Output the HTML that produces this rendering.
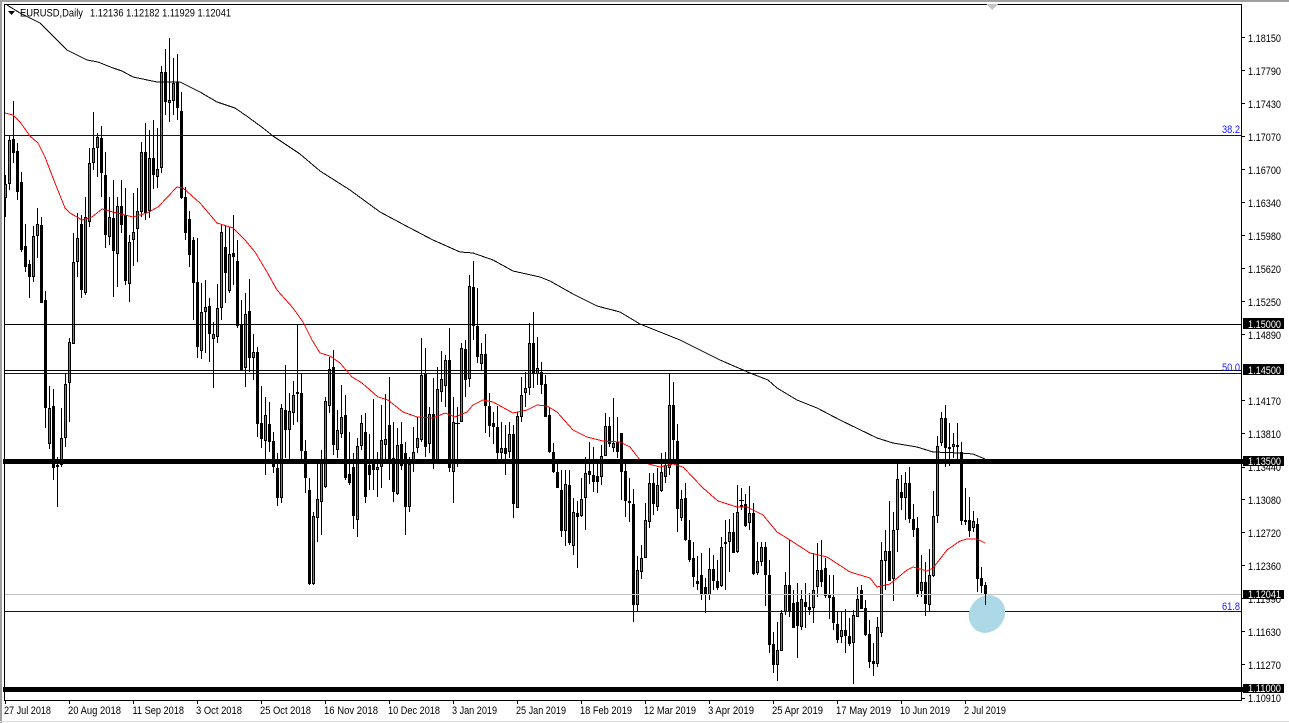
<!DOCTYPE html>
<html lang="en"><head><meta charset="utf-8"><title>EURUSD,Daily</title>
<style>
html,body{margin:0;padding:0;background:#fff;width:1289px;height:723px;overflow:hidden}
svg{display:block}
text{font-family:"Liberation Sans",Arial,sans-serif;font-size:11px;fill:#000}
.w text{fill:#fff}
.b text{fill:#1a1aff}
</style></head><body>
<svg width="1289" height="723" viewBox="0 0 1289 723" xmlns="http://www.w3.org/2000/svg">
<rect width="1289" height="723" fill="#fff"/>
<g shape-rendering="crispEdges">
<rect x="0" y="0" width="1289" height="2" fill="#a0a0a0"/>
<rect x="0" y="0" width="2" height="723" fill="#a0a0a0"/>
<rect x="0" y="721" width="1289" height="1" fill="#dcdcdc"/>
<path d="M4.5 4.5H1241.5V700.5H4.5Z" fill="none" stroke="#000"/>
<polygon points="986,4 998,4 992,10" fill="#c4c4c4"/>
<path fill="none" stroke="#000" d="M5.5 175V217M9.5 135V190M13.5 101V163M17.5 143V200M21.5 172V252M25.5 224V272M29.5 260V298M33.5 226V282M37.5 208V258M41.5 217V303M45.5 291V428M49.5 386V449M53.5 389V480M57.5 457V507M61.5 408V467M65.5 373V447M69.5 338V422M73.5 233V344M77.5 213V277M81.5 215V298M85.5 197V295M89.5 148V227M93.5 112V170M97.5 133V177M101.5 126V197M105.5 152V248M109.5 197V245M113.5 180V297M117.5 197V287M121.5 180V233M125.5 188V285M129.5 235V302M133.5 193V266M137.5 188V262M141.5 142V217M145.5 123V220M149.5 130V218M153.5 120V189M157.5 128V188M161.5 66V173M165.5 49V115M169.5 38V122M173.5 58V115M177.5 54V120M181.5 92V199M185.5 187V240M189.5 211V267M193.5 237V320M197.5 238V358M201.5 283V359M205.5 280V353M209.5 298V362M213.5 322V388M217.5 284V343M221.5 225V320M225.5 225V303M229.5 227V293M233.5 215V285M237.5 240V328M241.5 300V371M245.5 293V387M249.5 279V372M253.5 334V380M257.5 347V437M261.5 386V448M265.5 397V475M269.5 402V452M273.5 432V473M277.5 453V506M281.5 404V503M285.5 365V458M289.5 393V460M293.5 381V425M297.5 324V422M301.5 373V460M305.5 440V493M309.5 478V585M313.5 512V585M317.5 463V542M321.5 450V535M325.5 397V488M329.5 357V413M333.5 350V455M337.5 410V458M341.5 385V438M345.5 395V480M349.5 432V485M353.5 453V529M357.5 438V537M361.5 415V450M365.5 413V503M369.5 434V490M373.5 399V490M377.5 452V497M381.5 405V488M385.5 394V460M389.5 377V480M393.5 422V502M397.5 428V495M401.5 422V470M405.5 442V535M409.5 457V512M413.5 427V472M417.5 417V453M421.5 338V442M425.5 348V457M429.5 407V453M433.5 378V469M437.5 367V460M441.5 351V402M445.5 355V407M449.5 328V472M453.5 397V503M457.5 407V467M461.5 343V422M465.5 340V397M469.5 275V387M473.5 261V340M477.5 288V363M481.5 343V371M485.5 334V433M489.5 393V437M493.5 412V444M497.5 406V460M501.5 422V460M505.5 425V475M509.5 422V458M513.5 425V518M517.5 412V508M521.5 377V422M525.5 372V407M529.5 323V395M533.5 312V388M537.5 337V385M541.5 362V394M545.5 375V417M549.5 407V453M553.5 443V473M557.5 463V488M561.5 470V537M565.5 470V546M569.5 470V545M573.5 498V555M577.5 501V568M581.5 478V517M585.5 457V530M589.5 442V484M593.5 447V492M597.5 460V493M601.5 445V485M605.5 413V456M609.5 417V447M613.5 398V452M617.5 417V458M621.5 433V500M625.5 460V517M629.5 478V522M633.5 489V622M637.5 556V612M641.5 545V579M645.5 503V558M649.5 473V528M653.5 473V515M657.5 468V511M661.5 453V492M665.5 452V483M669.5 373V475M673.5 382V460M677.5 424V532M681.5 490V521M685.5 483V541M689.5 520V562M693.5 542V587M697.5 556V590M701.5 553V600M705.5 578V613M709.5 548V600M713.5 555V590M717.5 560V590M721.5 537V587M725.5 520V590M729.5 519V572M733.5 513V553M737.5 485V553M741.5 488V510M745.5 494V527M749.5 486V530M753.5 503V575M757.5 542V575M761.5 542V566M765.5 542V606M769.5 560V653M773.5 632V673M777.5 622V681M781.5 610V651M785.5 572V615M789.5 540V617M793.5 590V628M797.5 583V658M801.5 590V630M805.5 583V628M809.5 593V615M813.5 553V623M817.5 543V597M821.5 540V587M825.5 558V598M829.5 575V619M833.5 575V630M837.5 612V643M841.5 612V643M845.5 609V653M849.5 618V646M853.5 610V684M857.5 587V617M861.5 585V609M865.5 600V636M869.5 620V668M873.5 643V676M877.5 617V667M881.5 542V637M885.5 530V590M889.5 501V581M893.5 512V601M897.5 464V552M901.5 475V510M905.5 472V520M909.5 467V523M913.5 504V537M917.5 517V597M921.5 555V597M925.5 562V616M929.5 549V612M933.5 491V577M937.5 436V523M941.5 412V446M945.5 405V467M949.5 423V466M953.5 433V458M957.5 423V460M961.5 442V525M965.5 488V525M969.5 497V537M973.5 511V532M977.5 518V592M981.5 567V593"/>
<path fill="none" stroke="#000" stroke-width="3" d="M5.5 184V198M9.5 140V184M13.5 139V153M17.5 151V192M21.5 182V250M25.5 246V267M29.5 264V277M33.5 236V277M37.5 224V236M41.5 225V303M45.5 300V408M49.5 408V444M53.5 406V468M57.5 465V467M61.5 438V465M65.5 384V438M69.5 342V383M73.5 262V344M77.5 238V262M81.5 224V290M85.5 217V293M89.5 163V222M93.5 148V163M97.5 137V148M101.5 138V173M105.5 175V235M109.5 217V237M113.5 218V251M117.5 206V254M121.5 206V225M125.5 215V281M129.5 242V284M133.5 232V240M137.5 211V229M141.5 152V212M145.5 152V213M149.5 158V211M153.5 158V175M157.5 169V177M161.5 72V168M165.5 72V102M169.5 100V103M173.5 83V101M177.5 82V108M181.5 111V198M185.5 197V233M189.5 219V255M193.5 240V283M197.5 282V347M201.5 312V351M205.5 307V312M209.5 306V334M213.5 334V339M217.5 308V337M221.5 232V308M225.5 247V273M229.5 254V291M233.5 253V257M237.5 261V326M241.5 325V371M245.5 314V368M249.5 311V358M253.5 352V358M257.5 352V424M261.5 423V439M265.5 415V441M269.5 424V442M273.5 441V467M277.5 468V498M281.5 408V498M285.5 410V430M289.5 411V430M293.5 395V413M297.5 392V394M301.5 393V451M305.5 451V478M309.5 490V584M313.5 516V584M317.5 499V518M321.5 463V502M325.5 401V487M329.5 369V406M333.5 367V445M337.5 430V450M341.5 417V434M345.5 415V478M349.5 474V483M353.5 467V516M357.5 446V520M361.5 423V446M365.5 432V497M369.5 465V475M373.5 464V470M377.5 467V470M381.5 440V467M385.5 439V445M389.5 425V460M393.5 458V492M397.5 445V494M401.5 444V466M405.5 453V507M409.5 464V507M413.5 452V464M417.5 438V448M421.5 375V440M425.5 373V447M429.5 414V444M433.5 414V460M437.5 389V460M441.5 379V392M445.5 360V386M449.5 360V468M453.5 422V472M461.5 348V422M465.5 349V380M469.5 286V379M473.5 287V326M477.5 326V357M481.5 354V364M485.5 354V406M489.5 406V426M493.5 423V427M497.5 427V453M501.5 448V453M505.5 448V454M509.5 434V452M513.5 434V504M517.5 416V508M521.5 395V417M525.5 388V393M529.5 343V388M533.5 343V373M537.5 368V374M541.5 372V385M545.5 384V417M549.5 415V452M553.5 452V472M557.5 472V488M561.5 490V531M565.5 484V531M569.5 485V543M573.5 512V546M577.5 513V517M581.5 499V516M585.5 473V498M589.5 471V475M593.5 475V482M597.5 476V482M601.5 456V477M605.5 426V456M609.5 426V444M613.5 443V448M617.5 442V452M621.5 433V472M625.5 471V501M629.5 501V503M633.5 504V605M637.5 570V605M641.5 558V572M645.5 520V558M649.5 483V522M653.5 483V504M657.5 485V507M661.5 472V491M665.5 465V477M669.5 405V468M673.5 405V440M677.5 441V509M681.5 499V518M685.5 498V540M689.5 540V560M693.5 558V577M697.5 581V584M701.5 575V595M705.5 587V594M709.5 569V595M713.5 569V581M717.5 581V588M721.5 547V586M725.5 542V544M729.5 532V542M733.5 532V553M737.5 512V552M741.5 505V507M745.5 504V526M749.5 513V523M753.5 513V574M757.5 561V573M761.5 547V562M765.5 547V575M769.5 575V645M773.5 644V665M777.5 650V665M781.5 613V651M785.5 585V612M789.5 585V612M793.5 603V628M797.5 602V626M801.5 599V627M805.5 602V607M809.5 607V610M813.5 590V608M817.5 570V587M821.5 570V582M825.5 568V596M829.5 595V598M833.5 597V623M837.5 624V640M841.5 630V637M845.5 630V636M849.5 636V644M853.5 615V643M857.5 599V617M861.5 590V609M865.5 608V635M869.5 634V662M873.5 661V664M877.5 627V664M881.5 560V633M885.5 551V561M889.5 551V581M893.5 530V579M897.5 479V530M901.5 492V498M905.5 483V498M909.5 483V519M913.5 519V530M917.5 528V594M921.5 582V591M925.5 582V604M929.5 575V605M933.5 516V576M937.5 446V516M941.5 418V443M945.5 418V448M949.5 447V449M953.5 444V447M957.5 445V447M961.5 452V521M965.5 520V522M969.5 520V531M973.5 521V528M977.5 524V579M981.5 578V586"/>
<path fill="none" stroke="#1fc01f" d="M5.5 185V197M9.5 141V183M33.5 237V276M37.5 225V235M49.5 409V443M61.5 439V464M65.5 385V437M69.5 343V382M73.5 263V343M77.5 239V261M85.5 218V292M89.5 164V221M93.5 149V162M97.5 138V147M109.5 218V236M117.5 207V253M129.5 243V283M133.5 233V239M137.5 212V228M141.5 153V211M149.5 159V210M157.5 170V176M161.5 73V167M169.5 101V102M173.5 84V100M201.5 313V350M205.5 308V311M213.5 335V338M217.5 309V336M221.5 233V307M229.5 255V290M245.5 315V367M253.5 353V357M265.5 416V440M281.5 409V497M289.5 412V429M293.5 396V412M313.5 517V583M317.5 500V517M321.5 464V501M325.5 402V486M329.5 370V405M337.5 431V449M341.5 418V433M357.5 447V519M361.5 424V445M377.5 468V469M381.5 441V466M385.5 440V444M397.5 446V493M409.5 465V506M413.5 453V463M417.5 439V447M421.5 376V439M429.5 415V443M437.5 390V459M441.5 380V391M445.5 361V385M453.5 423V471M461.5 349V421M469.5 287V378M481.5 355V363M501.5 449V452M509.5 435V451M517.5 417V507M521.5 396V416M525.5 389V392M529.5 344V387M537.5 369V373M565.5 485V530M573.5 513V545M581.5 500V515M585.5 474V497M601.5 457V476M605.5 427V455M613.5 444V447M637.5 571V604M641.5 559V571M645.5 521V557M649.5 484V521M657.5 486V506M661.5 473V490M665.5 466V476M669.5 406V467M681.5 500V517M709.5 570V594M721.5 548V585M725.5 543V543M729.5 533V541M737.5 513V551M749.5 514V522M757.5 562V572M761.5 548V561M777.5 651V664M781.5 614V650M785.5 586V611M801.5 600V626M813.5 591V607M817.5 571V586M841.5 631V636M853.5 616V642M857.5 600V616M877.5 628V663M881.5 561V632M885.5 552V560M893.5 531V578M897.5 480V529M905.5 484V497M921.5 583V590M929.5 576V604M933.5 517V575M937.5 447V515M941.5 419V442M953.5 445V446M973.5 522V527"/>
<!-- doji crosses -->
<path stroke="#000" d="M455 423.5H460M739 500.5H744"/>
<!-- horizontal lines -->
<rect x="5" y="135" width="1236" height="1" fill="#0000c8"/>
<rect x="5" y="324" width="1236" height="1" fill="#000"/>
<rect x="5" y="370" width="1236" height="1" fill="#000"/>
<rect x="5" y="373" width="1236" height="1" fill="#0000c8"/>
<rect x="5" y="594" width="1236" height="1" fill="#c0c0c0"/>
<rect x="5" y="611" width="1236" height="1" fill="#0000c8"/>
</g>
<!-- moving averages -->
<g fill="none" shape-rendering="crispEdges">
<polyline stroke="#000" points="7,5 20,13 40,23 55,38 67,50 87,60 98,62 113,68 122,71 133,77 157,82 180,82 200,92 217,102 235,108 248,117 263,128 273,136 300,154 320,171 350,190 380,212 410,228 433,240 460,252 473,253 493,260 513,271 540,277 550,281 573,294 597,306 620,312 640,324 680,340 720,360 750,373 768,380 777,388 797,400 817,408 840,420 877,438 893,443 917,447 933,452 960,453 973,454 985,459"/>
<polyline stroke="#f00" points="5,113 13,115 20,122 30,136 38,143 45,157 55,183 65,208 70,213 82,220 92,217 102,209 113,212 125,215 133,217 147,213 158,207 177,187 183,188 200,203 217,223 233,228 245,240 255,252 267,272 277,290 293,308 303,322 312,340 320,353 330,356 340,363 352,377 362,383 378,397 388,400 403,412 417,417 433,418 445,413 455,417 467,412 473,405 483,400 493,402 513,413 527,410 537,405 547,406 557,412 573,430 587,437 603,441 620,442 630,447 640,460 645,463 660,467 673,464 683,467 703,488 718,501 737,507 747,507 763,515 777,532 790,540 810,553 827,557 850,572 870,578 877,587 890,584 907,570 913,567 927,571 933,568 947,550 960,541 967,539 977,539 985,543"/>
</g>
<!-- thick lines -->
<g shape-rendering="crispEdges">
<rect x="3" y="459" width="1240" height="5" fill="#000"/>
<rect x="3" y="687" width="1240" height="5" fill="#000"/>
</g>
<!-- highlight circle -->
<ellipse cx="987" cy="614" rx="19.5" ry="17.5" transform="rotate(-55 987 614)" fill="#add8e6"/>
<path shape-rendering="crispEdges" fill="none" stroke="#000" d="M985.5 582V605"/>
<path shape-rendering="crispEdges" fill="none" stroke="#000" stroke-width="3" d="M985.5 585V594"/>
<!-- axis ticks -->
<path shape-rendering="crispEdges" stroke="#000" fill="none" d="M1241 37.5h4M1241 70.5h4M1241 103.5h4M1241 136.5h4M1241 169.5h4M1241 202.5h4M1241 235.5h4M1241 268.5h4M1241 301.5h4M1241 334.5h4M1241 400.5h4M1241 433.5h4M1241 467.5h4M1241 499.5h4M1241 532.5h4M1241 565.5h4M1241 598.5h4M1241 631.5h4M1241 664.5h4M1241 698.5h4M5.5 700v4M69.5 700v4M133.5 700v4M197.5 700v4M261.5 700v4M325.5 700v4M389.5 700v4M453.5 700v4M517.5 700v4M581.5 700v4M645.5 700v4M709.5 700v4M773.5 700v4M837.5 700v4M901.5 700v4M965.5 700v4"/>
<!-- price axis -->
<g>
<text x="1248" y="42" textLength="33" lengthAdjust="spacingAndGlyphs">1.18150</text>
<text x="1248" y="75" textLength="33" lengthAdjust="spacingAndGlyphs">1.17790</text>
<text x="1248" y="108" textLength="33" lengthAdjust="spacingAndGlyphs">1.17430</text>
<text x="1248" y="141" textLength="33" lengthAdjust="spacingAndGlyphs">1.17070</text>
<text x="1248" y="174" textLength="33" lengthAdjust="spacingAndGlyphs">1.16700</text>
<text x="1248" y="207" textLength="33" lengthAdjust="spacingAndGlyphs">1.16340</text>
<text x="1248" y="240" textLength="33" lengthAdjust="spacingAndGlyphs">1.15980</text>
<text x="1248" y="273" textLength="33" lengthAdjust="spacingAndGlyphs">1.15620</text>
<text x="1248" y="306" textLength="33" lengthAdjust="spacingAndGlyphs">1.15250</text>
<text x="1248" y="339" textLength="33" lengthAdjust="spacingAndGlyphs">1.14890</text>
<text x="1248" y="405" textLength="33" lengthAdjust="spacingAndGlyphs">1.14170</text>
<text x="1248" y="438" textLength="33" lengthAdjust="spacingAndGlyphs">1.13810</text>
<text x="1248" y="471" textLength="33" lengthAdjust="spacingAndGlyphs">1.13440</text>
<text x="1248" y="504" textLength="33" lengthAdjust="spacingAndGlyphs">1.13080</text>
<text x="1248" y="537" textLength="33" lengthAdjust="spacingAndGlyphs">1.12720</text>
<text x="1248" y="570" textLength="33" lengthAdjust="spacingAndGlyphs">1.12360</text>
<text x="1248" y="603" textLength="33" lengthAdjust="spacingAndGlyphs">1.11990</text>
<text x="1248" y="636" textLength="33" lengthAdjust="spacingAndGlyphs">1.11630</text>
<text x="1248" y="669" textLength="33" lengthAdjust="spacingAndGlyphs">1.11270</text>
<text x="1248" y="702" textLength="33" lengthAdjust="spacingAndGlyphs">1.10910</text>
</g>
<!-- price labels -->
<g shape-rendering="crispEdges" fill="#000">
<rect x="1243" y="318" width="41" height="11"/>
<rect x="1243" y="364" width="41" height="11"/>
<rect x="1243" y="456" width="41" height="10"/>
<rect x="1243" y="590" width="41" height="9"/>
<rect x="1243" y="684" width="41" height="9"/>
</g>
<g class="w">
<text x="1248" y="328" textLength="33" lengthAdjust="spacingAndGlyphs">1.15000</text>
<text x="1248" y="374" textLength="33" lengthAdjust="spacingAndGlyphs">1.14500</text>
<text x="1248" y="465" textLength="33" lengthAdjust="spacingAndGlyphs">1.13500</text>
<text x="1248" y="598" textLength="33" lengthAdjust="spacingAndGlyphs">1.12041</text>
<text x="1248" y="692" textLength="33" lengthAdjust="spacingAndGlyphs">1.11000</text>
</g>
<!-- fib labels -->
<g class="b">
<text x="1222" y="133" textLength="18" lengthAdjust="spacingAndGlyphs">38.2</text>
<text x="1222" y="371" textLength="18" lengthAdjust="spacingAndGlyphs">50.0</text>
<text x="1222" y="610" textLength="18" lengthAdjust="spacingAndGlyphs">61.8</text>
</g>
<!-- time axis -->
<g>
<text x="4" y="714" textLength="47" lengthAdjust="spacingAndGlyphs">27 Jul 2018</text>
<text x="68" y="714" textLength="53" lengthAdjust="spacingAndGlyphs">20 Aug 2018</text>
<text x="132.5" y="714" textLength="51.5" lengthAdjust="spacingAndGlyphs">11 Sep 2018</text>
<text x="196" y="714" textLength="46" lengthAdjust="spacingAndGlyphs">3 Oct 2018</text>
<text x="260" y="714" textLength="51" lengthAdjust="spacingAndGlyphs">25 Oct 2018</text>
<text x="324" y="714" textLength="54" lengthAdjust="spacingAndGlyphs">16 Nov 2018</text>
<text x="388" y="714" textLength="52" lengthAdjust="spacingAndGlyphs">10 Dec 2018</text>
<text x="452" y="714" textLength="45" lengthAdjust="spacingAndGlyphs">3 Jan 2019</text>
<text x="516" y="714" textLength="50" lengthAdjust="spacingAndGlyphs">25 Jan 2019</text>
<text x="580" y="714" textLength="52" lengthAdjust="spacingAndGlyphs">18 Feb 2019</text>
<text x="644" y="714" textLength="52" lengthAdjust="spacingAndGlyphs">12 Mar 2019</text>
<text x="708" y="714" textLength="46" lengthAdjust="spacingAndGlyphs">3 Apr 2019</text>
<text x="772" y="714" textLength="51" lengthAdjust="spacingAndGlyphs">25 Apr 2019</text>
<text x="836" y="714" textLength="55" lengthAdjust="spacingAndGlyphs">17 May 2019</text>
<text x="900" y="714" textLength="50" lengthAdjust="spacingAndGlyphs">10 Jun 2019</text>
<text x="964" y="714" textLength="42" lengthAdjust="spacingAndGlyphs">2 Jul 2019</text>
</g>
<!-- header -->
<polygon points="8,11 15,11 11.5,15" fill="#000"/>
<text x="20" y="16.5" textLength="63" lengthAdjust="spacingAndGlyphs">EURUSD,Daily</text>
<text x="90" y="16.5" textLength="141" lengthAdjust="spacingAndGlyphs">1.12136 1.12182 1.11929 1.12041</text>
</svg>
</body></html>
